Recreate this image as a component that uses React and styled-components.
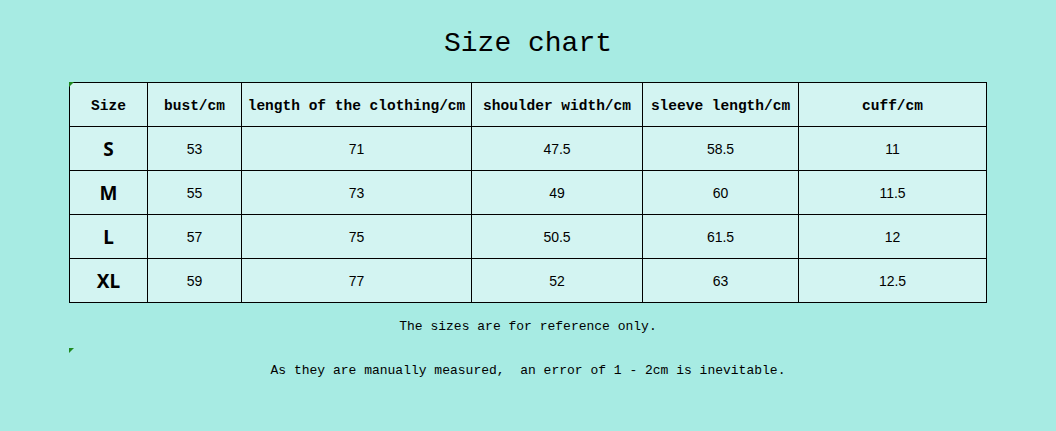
import React from 'react';
import styled, { createGlobalStyle } from 'styled-components';

const GlobalStyle = createGlobalStyle`
  html, body {
    margin: 0;
    padding: 0;
    background: #a7ebe3;
  }
`;

const Page = styled.div`
  width: 1056px;
  height: 431px;
  padding-top: 24px;
  box-sizing: border-box;
  background: #a7ebe3;
  display: flex;
  flex-direction: column;
  align-items: center;
  font-family: "Liberation Mono", "DejaVu Sans Mono", monospace;
  color: #000;
`;

const Title = styled.h1`
  margin: 0 0 18px;
  font-family: "Liberation Mono", "DejaVu Sans Mono", monospace;
  font-weight: normal;
  font-size: 28px;
  line-height: 40px;
`;

const Grid = styled.div`
  position: relative;
  display: grid;
  grid-template-columns: 77px 93px 229px 170px 155px 187px;
  grid-auto-rows: 43px;
  gap: 1px;
  padding: 1px;
  background: #000;
`;

const Marker = styled.span`
  position: absolute;
  left: ${p => p.$left || 0}px;
  top: ${p => p.$top || 0}px;
  width: 0;
  height: 0;
  border-top: 5px solid #1f8a1f;
  border-right: 5px solid transparent;
`;

const Cell = styled.div`
  background: #d3f4f2;
  display: flex;
  align-items: center;
  justify-content: center;
  white-space: nowrap;
  overflow: hidden;
`;

const HeadCell = styled(Cell)`
  font-family: "Liberation Mono", "DejaVu Sans Mono", monospace;
  font-weight: bold;
  font-size: 14.5px;
  padding-top: 2px;
`;

const SizeCell = styled(Cell)`
  font-family: "Noto Sans", "DejaVu Sans", sans-serif;
  font-weight: bold;
  font-size: 19px;
`;

const ValueCell = styled(Cell)`
  font-family: "Liberation Sans", Arial, sans-serif;
  font-size: 14px;
`;

const Notes = styled.div`
  position: relative;
  width: 918px;
  margin-top: 13px;
  display: flex;
  flex-direction: column;
  align-items: center;
`;

const Note = styled.p`
  margin: 0;
  font-size: 13px;
  line-height: 22px;
  white-space: pre;
`;

const Spacer = styled.div`
  height: 22px;
`;

const headers = ['Size', 'bust/cm', 'length of the clothing/cm', 'shoulder width/cm', 'sleeve length/cm', 'cuff/cm'];

const rows = [
  ['S', '53', '71', '47.5', '58.5', '11'],
  ['M', '55', '73', '49', '60', '11.5'],
  ['L', '57', '75', '50.5', '61.5', '12'],
  ['XL', '59', '77', '52', '63', '12.5'],
];

export default function App() {
  return (
    <>
      <GlobalStyle />
      <Page>
        <Title>Size chart</Title>
        <Grid>
          <Marker $left={0} $top={0} />
          {headers.map(h => (
            <HeadCell key={h}>{h}</HeadCell>
          ))}
          {rows.map(r => (
            <React.Fragment key={r[0]}>
              <SizeCell>{r[0]}</SizeCell>
              {r.slice(1).map((v, i) => (
                <ValueCell key={i}>{v}</ValueCell>
              ))}
            </React.Fragment>
          ))}
        </Grid>
        <Notes>
          <Note>The sizes are for reference only.</Note>
          <Spacer />
          <Marker $left={0} $top={32} />
          <Note>As they are manually measured,  an error of 1 - 2cm is inevitable.</Note>
        </Notes>
      </Page>
    </>
  );
}
